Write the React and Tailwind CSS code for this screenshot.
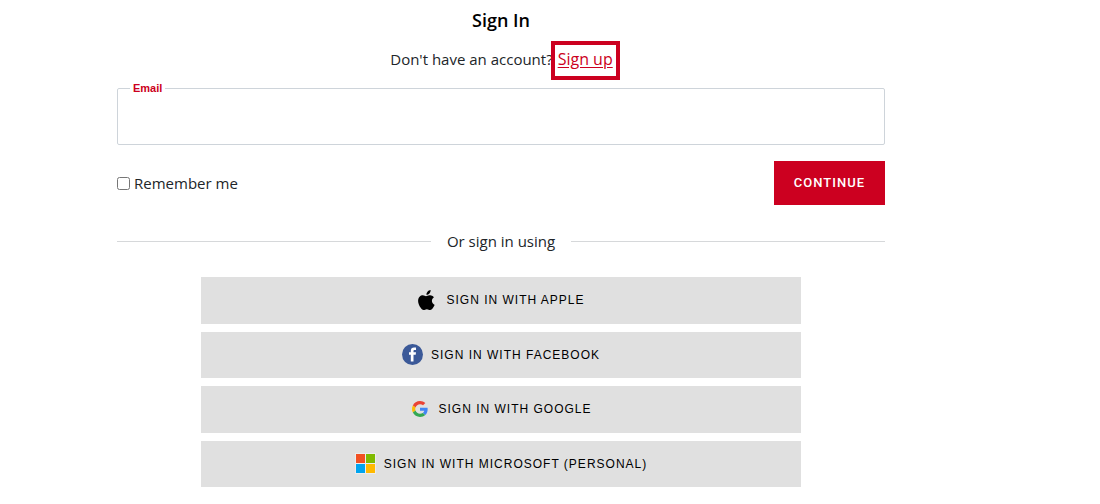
function AppleIcon() {
  return (
    <svg viewBox="-1 0 21 21" className="size-[21px]" aria-hidden="true">
      <path d="M12.600 0c.15 1.300-.35 2.500-1.150 3.400-.75.900-1.900 1.550-3.050 1.450-.15-1.200.45-2.400 1.100-3.200C10.250.8 11.500.150 12.600 0z" />
      <path d="M16 7.150c-.1.100-2.100 1.200-2.100 3.600 0 2.900 2.600 3.950 2.700 3.950 0 .05-.4 1.400-1.400 2.800-.85 1.250-1.750 2.500-3.100 2.500s-1.700-.8-3.250-.8c-1.500 0-2.050.8-3.300.8s-2.100-1.150-3.050-2.500C1.350 15.900.1 13.400.1 11c0-3.700 2.400-5.700 4.800-5.700 1.250 0 2.300.85 3.100.85.75 0 1.950-.9 3.400-.9.55 0 2.900.05 4.600 1.900z" />
    </svg>
  );
}

function FacebookIcon() {
  return (
    <svg viewBox="0 0 21 21" className="size-[21px]" aria-hidden="true">
      <circle cx="10.500" cy="10.500" r="10.500" fill="#3b5998" />
      <path
        fill="#fff"
        d="M8.800 17.500v-6.700H7V8.300h1.800V6.800c0-2.100 1.200-3.300 3.300-3.300.9 0 1.700.1 1.900.1v2.300h-1.300c-1 0-1.200.5-1.200 1.200v1.200H14l-.3 2.500h-2.200v6.700z"
      />
    </svg>
  );
}

function GoogleIcon() {
  return (
    <svg viewBox="0 0 48 48" className="mx-[2px] size-[16px]" aria-hidden="true">
      <path fill="#EA4335" d="M24 9.500c3.540 0 6.710 1.220 9.210 3.600l6.850-6.850C35.900 2.380 30.470 0 24 0 14.620 0 6.510 5.380 2.560 13.220l7.980 6.190C12.430 13.720 17.740 9.500 24 9.500z" />
      <path fill="#4285F4" d="M46.980 24.550c0-1.570-.15-3.090-.38-4.550H24v9.020h12.940c-.58 2.960-2.260 5.480-4.780 7.180l7.730 6c4.510-4.180 7.090-10.360 7.090-17.650z" />
      <path fill="#FBBC05" d="M10.530 28.590c-.48-1.450-.76-2.990-.76-4.590s.27-3.140.76-4.590l-7.980-6.190C.92 16.460 0 20.120 0 24c0 3.880.92 7.540 2.560 10.780l7.970-6.190z" />
      <path fill="#34A853" d="M24 48c6.480 0 11.930-2.130 15.890-5.810l-7.730-6c-2.150 1.450-4.920 2.300-8.160 2.300-6.260 0-11.570-4.220-13.470-9.910l-7.980 6.190C6.510 42.620 14.620 48 24 48z" />
    </svg>
  );
}

function MicrosoftIcon() {
  return (
    <svg viewBox="0 0 21 21" className="size-[21px]" aria-hidden="true">
      <path fill="#ececec" d="M0 0h21v21H0z" />
      <path fill="#f25022" d="M1 1h9v9H1z" />
      <path fill="#7fba00" d="M11 1h9v9h-9z" />
      <path fill="#00a4ef" d="M1 11h9v9H1z" />
      <path fill="#ffb900" d="M11 11h9v9h-9z" />
    </svg>
  );
}

const providers = [
  { label: "Sign in with Apple", Icon: AppleIcon },
  { label: "Sign in with Facebook", Icon: FacebookIcon },
  { label: "Sign in with Google", Icon: GoogleIcon },
  { label: "Sign in with Microsoft (Personal)", Icon: MicrosoftIcon },
];

export default function App() {
  return (
    <div className="max-w-[1002px] bg-white px-[117px] pt-2 pb-4 font-['Open_Sans','Noto_Sans',sans-serif] text-[15px] leading-6 text-[#212529]">
      <main>
        <h1 className="text-center text-[18px] font-semibold text-black">Sign In</h1>
        <p className="mt-[9px] flex items-start justify-center">
          <span className="-mr-[2px] pt-[6px]">Don't have an account?</span>
          <a
            href="#signup"
            className="-mr-2 border-4 border-[#cc0020] px-[3px] pt-[2px] pb-[5px] text-base leading-6 text-[#cc0020] underline underline-offset-2"
          >
            Sign up
          </a>
        </p>
        <form className="mt-[2px]" onSubmit={(e) => e.preventDefault()}>
          <fieldset className="h-[63px] rounded-[2px] border border-[#ced4da] px-3">
            <legend className="px-[3px] font-['Liberation_Sans',Arial,sans-serif] text-[11px] leading-3 font-bold text-[#cc0020]">
              <label htmlFor="email">Email</label>
            </legend>
            <input id="email" type="email" className="h-12 w-full bg-transparent text-base outline-none" />
          </fieldset>
          <div className="mt-4 flex items-center justify-between">
            <label className="flex items-center gap-1">
              <input type="checkbox" className="size-[13px]" />
              Remember me
            </label>
            <button
              type="submit"
              className="h-11 bg-[#cc0020] px-5 font-['Roboto',sans-serif] text-[13px] font-medium tracking-[1px] text-white uppercase"
            >
              Continue
            </button>
          </div>
        </form>
        <div className="mt-6 flex items-center gap-4">
          <span className="h-px flex-1 bg-[#d6d8da]" />
          Or sign in using
          <span className="h-px flex-1 bg-[#d6d8da]" />
        </div>
        <div className="mx-auto mt-6 grid h-[210px] max-w-[600px] grid-rows-4 gap-2">
          {providers.map(({ label, Icon }) => (
            <button
              key={label}
              type="button"
              className="flex items-center justify-center gap-2 bg-[#e0e0e0] font-['Liberation_Sans',Arial,sans-serif] text-[12px] tracking-[1px] text-black uppercase"
            >
              <Icon />
              {label}
            </button>
          ))}
        </div>
      </main>
    </div>
  );
}
